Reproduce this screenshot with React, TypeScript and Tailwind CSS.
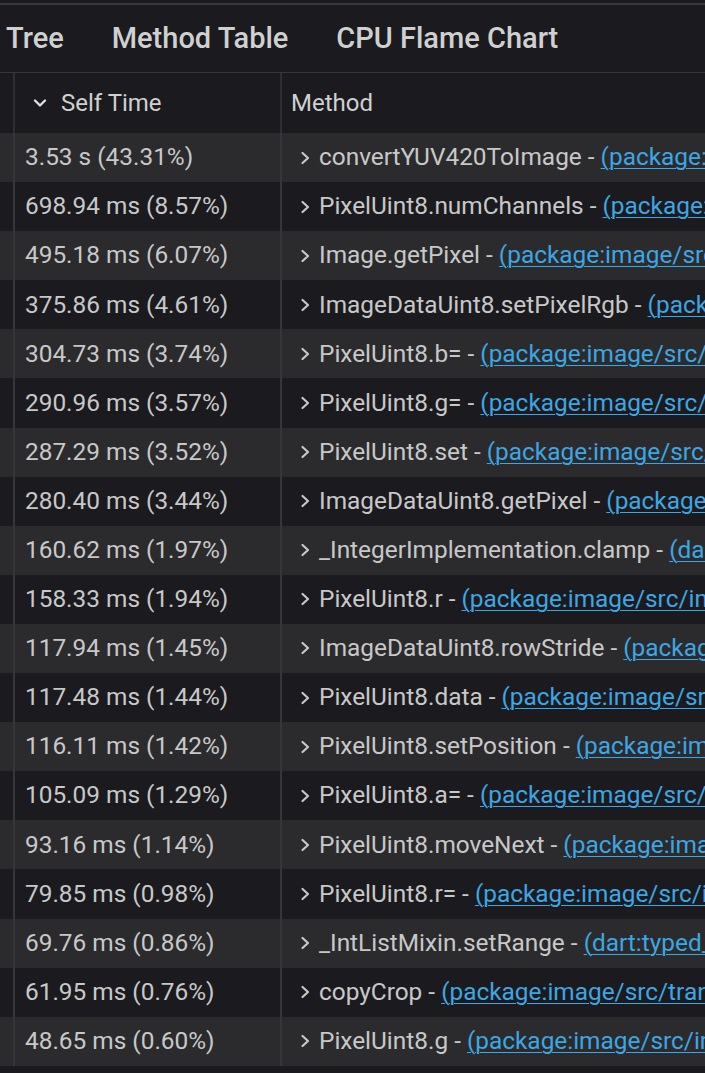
import React from "react";

type Row = { time: string; method: string; source: string };

const rows: Row[] = [
  { time: "3.53 s (43.31%)", method: "convertYUV420ToImage", source: "(package:camera_app/utils/image_utils.dart)" },
  { time: "698.94 ms (8.57%)", method: "PixelUint8.numChannels", source: "(package:image/src/image/pixel_uint8.dart)" },
  { time: "495.18 ms (6.07%)", method: "Image.getPixel", source: "(package:image/src/image/image.dart)" },
  { time: "375.86 ms (4.61%)", method: "ImageDataUint8.setPixelRgb", source: "(package:image/src/image/image_data_uint8.dart)" },
  { time: "304.73 ms (3.74%)", method: "PixelUint8.b=", source: "(package:image/src/image/pixel_uint8.dart)" },
  { time: "290.96 ms (3.57%)", method: "PixelUint8.g=", source: "(package:image/src/image/pixel_uint8.dart)" },
  { time: "287.29 ms (3.52%)", method: "PixelUint8.set", source: "(package:image/src/image/pixel_uint8.dart)" },
  { time: "280.40 ms (3.44%)", method: "ImageDataUint8.getPixel", source: "(package:image/src/image/image_data_uint8.dart)" },
  { time: "160.62 ms (1.97%)", method: "_IntegerImplementation.clamp", source: "(dart:core-patch/integers.dart)" },
  { time: "158.33 ms (1.94%)", method: "PixelUint8.r", source: "(package:image/src/image/pixel_uint8.dart)" },
  { time: "117.94 ms (1.45%)", method: "ImageDataUint8.rowStride", source: "(package:image/src/image/image_data_uint8.dart)" },
  { time: "117.48 ms (1.44%)", method: "PixelUint8.data", source: "(package:image/src/image/pixel_uint8.dart)" },
  { time: "116.11 ms (1.42%)", method: "PixelUint8.setPosition", source: "(package:image/src/image/pixel_uint8.dart)" },
  { time: "105.09 ms (1.29%)", method: "PixelUint8.a=", source: "(package:image/src/image/pixel_uint8.dart)" },
  { time: "93.16 ms (1.14%)", method: "PixelUint8.moveNext", source: "(package:image/src/image/pixel_uint8.dart)" },
  { time: "79.85 ms (0.98%)", method: "PixelUint8.r=", source: "(package:image/src/image/pixel_uint8.dart)" },
  { time: "69.76 ms (0.86%)", method: "_IntListMixin.setRange", source: "(dart:typed_data-patch/typed_data_patch.dart)" },
  { time: "61.95 ms (0.76%)", method: "copyCrop", source: "(package:image/src/transform/copy_crop.dart)" },
  { time: "48.65 ms (0.60%)", method: "PixelUint8.g", source: "(package:image/src/image/pixel_uint8.dart)" },
];

function ChevronRight() {
  return (
    <svg width="12" height="14" viewBox="0 0 12 14" className="shrink-0">
      <path d="M3.5 2 L9 7 L3.5 12" fill="none" stroke="#c8c8c8" strokeWidth="2.2" strokeLinecap="round" strokeLinejoin="round" />
    </svg>
  );
}

function ChevronDown() {
  return (
    <svg width="14" height="12" viewBox="0 0 14 12" className="shrink-0">
      <path d="M2 3.5 L7 8.5 L12 3.5" fill="none" stroke="#e0e0e0" strokeWidth="2.4" strokeLinecap="round" strokeLinejoin="round" />
    </svg>
  );
}

export default function App() {
  return (
    <div
      className="h-[1073px] w-[705px] overflow-hidden bg-[#1b1b1f] text-[#c8c8c8]"
      style={{ fontFamily: "Roboto, 'Noto Sans', sans-serif" }}
    >
      <div className="h-[3px] bg-[#1b1b1f]" />
      <div className="h-[2px] bg-[#36363b]" />

      {/* tabs */}
      <div className="flex h-[68px] items-center border-b border-[#36363b] text-[29px] font-medium text-[#d0d0d0]">
        <span className="ml-[6px]">Tree</span>
        <span className="ml-[48px]">Method Table</span>
        <span className="ml-[48px]">CPU Flame Chart</span>
      </div>

      {/* header */}
      <div className="flex h-[60px] items-stretch text-[24px] text-[#d0d0d0]">
        <div className="w-[15px] shrink-0 border-r-2 border-[#2e2e33]" />
        <div className="flex w-[267px] shrink-0 items-center gap-[14px] border-r-2 border-[#2e2e33] pl-[18px]">
          <ChevronDown />
          <span>Self Time</span>
        </div>
        <div className="flex min-w-0 flex-1 items-center pl-[9px]">Method</div>
      </div>

      {/* rows */}
      {rows.map((r, i) => (
        <div
          key={i}
          className={
            "flex h-[49.1px] items-stretch text-[24.4px] " +
            (i % 2 === 0 ? "bg-[#2b2b2e]" : "bg-[#1b1b1f]")
          }
        >
          <div className="w-[15px] shrink-0 border-r-2 border-[#35353a]" />
          <div className="flex w-[267px] shrink-0 items-center border-r-2 border-[#35353a] pl-[10px] whitespace-nowrap">
            {r.time}
          </div>
          <div className="flex min-w-0 flex-1 items-center overflow-hidden whitespace-nowrap pl-[17px]">
            <ChevronRight />
            <span className="ml-[8px]">{r.method}</span>
            <span>&nbsp;-&nbsp;</span>
            <span className="text-[#3ea6e2] underline decoration-1 underline-offset-[3px]">{r.source}</span>
          </div>
        </div>
      ))}
    </div>
  );
}
